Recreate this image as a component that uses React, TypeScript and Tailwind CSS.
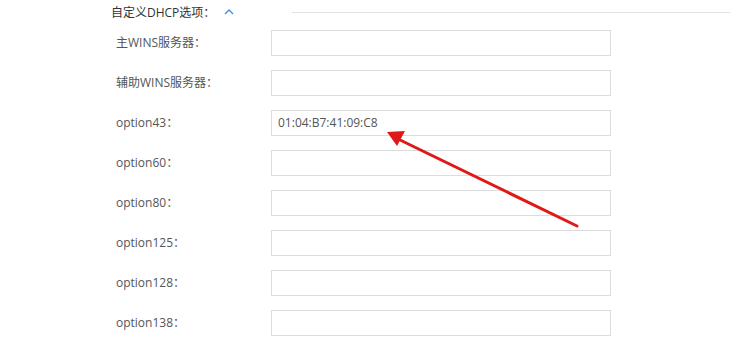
const rows = [
  { label: "主WINS服务器：", value: "" },
  { label: "辅助WINS服务器：", value: "" },
  { label: "option43：", value: "01:04:B7:41:09:C8" },
  { label: "option60：", value: "" },
  { label: "option80：", value: "" },
  { label: "option125：", value: "" },
  { label: "option128：", value: "" },
  { label: "option138：", value: "" },
];

export default function App() {
  return (
    <div
      className="relative w-[730px] h-[339px] overflow-hidden bg-white text-[12px]"
      style={{ fontFamily: '"Open Sans", "Noto Sans CJK SC", sans-serif' }}
    >
      {/* Section header */}
      <div className="flex h-[26px] items-center pl-[111px]">
        <span className="text-[#333]">自定义DHCP选项：</span>
        <svg width="10" height="6" viewBox="0 0 10 6" className="ml-[9px] mt-[-2px]">
          <path d="M1 5 L5 1 L9 5" fill="none" stroke="#3a8ee6" strokeWidth="1.3" />
        </svg>
        <div className="ml-[58px] mt-[-2px] flex-1 border-t border-[#e2e2e2]" />
      </div>

      {/* Fields */}
      <div className="mt-[4px] flex flex-col gap-[14px] pl-[116px]">
        {rows.map((row) => (
          <div key={row.label} className="flex h-[26px] items-center">
            <span className="w-[155px] text-[#555]">{row.label}</span>
            <div className="flex h-[26px] w-[340px] items-center border border-[#dcdcdc] px-[6px] text-[#555]">
              {row.value}
            </div>
          </div>
        ))}
      </div>

      {/* Annotation arrow */}
      <svg className="absolute left-0 top-0" width="730" height="339">
        <line x1="577" y1="226" x2="398" y2="139" stroke="#e01818" strokeWidth="3" strokeLinecap="round" />
        <polygon points="387,132 405,131 397,146" fill="#e01818" />
      </svg>
    </div>
  );
}
